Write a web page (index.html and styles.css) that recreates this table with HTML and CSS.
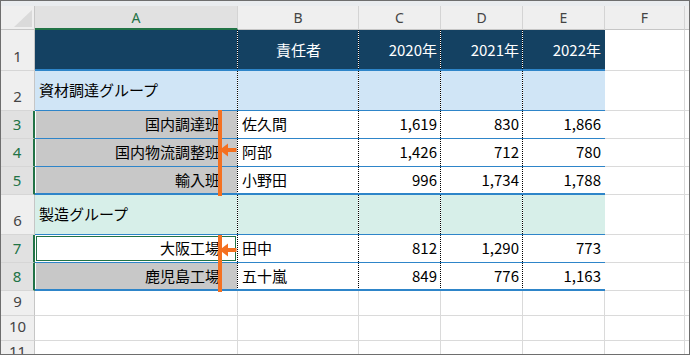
FILE: index.html
```html
<!DOCTYPE html>
<html lang="ja">
<head>
<meta charset="utf-8">
<title>Sheet</title>
<link rel="stylesheet" href="styles.css">
</head>
<body>
<div class="win">
  <div class="strip"></div>
  <div class="sheet">
    <div class="corner"><i></i></div>
    <div class="ch sel">A</div>
    <div class="ch">B</div>
    <div class="ch">C</div>
    <div class="ch">D</div>
    <div class="ch">E</div>
    <div class="ch">F</div>
    <div class="ch end"></div>

    <div class="rh">1</div>
    <div class="c hd dl"></div>
    <div class="c hd dl ctr">責任者</div>
    <div class="c hd dl r">2020年</div>
    <div class="c hd dl r">2021年</div>
    <div class="c hd r">2022年</div>
    <div class="c g"></div>
    <div class="c"></div>

    <div class="rh">2</div>
    <div class="c r2 dl">資材調達グループ</div>
    <div class="c r2 dl"></div>
    <div class="c r2 dl"></div>
    <div class="c r2 dl"></div>
    <div class="c r2"></div>
    <div class="c g"></div>
    <div class="c"></div>

    <div class="rh sel">3</div>
    <div class="c w dl sa ra">国内調達班</div>
    <div class="c w dl">佐久間</div>
    <div class="c w dl r">1,619</div>
    <div class="c w dl r">830</div>
    <div class="c w r">1,866</div>
    <div class="c g"></div>
    <div class="c"></div>

    <div class="rh sel">4</div>
    <div class="c w dl sa ra">国内物流調整班</div>
    <div class="c w dl">阿部</div>
    <div class="c w dl r">1,426</div>
    <div class="c w dl r">712</div>
    <div class="c w r">780</div>
    <div class="c g"></div>
    <div class="c"></div>

    <div class="rh sel">5</div>
    <div class="c w thick dl sa ra">輸入班</div>
    <div class="c w thick dl">小野田</div>
    <div class="c w thick dl r">996</div>
    <div class="c w thick dl r">1,734</div>
    <div class="c w thick r">1,788</div>
    <div class="c g"></div>
    <div class="c"></div>

    <div class="rh">6</div>
    <div class="c r6 dl">製造グループ</div>
    <div class="c r6 dl"></div>
    <div class="c r6 dl"></div>
    <div class="c r6 dl"></div>
    <div class="c r6"></div>
    <div class="c g"></div>
    <div class="c"></div>

    <div class="rh sel">7</div>
    <div class="c w dl ra act">大阪工場</div>
    <div class="c w dl">田中</div>
    <div class="c w dl r">812</div>
    <div class="c w dl r">1,290</div>
    <div class="c w r">773</div>
    <div class="c g"></div>
    <div class="c"></div>

    <div class="rh sel">8</div>
    <div class="c w thick dl sa ra">鹿児島工場</div>
    <div class="c w thick dl">五十嵐</div>
    <div class="c w thick dl r">849</div>
    <div class="c w thick dl r">776</div>
    <div class="c w thick r">1,163</div>
    <div class="c g"></div>
    <div class="c"></div>

    <div class="rh">9</div>
    <div class="c g"></div><div class="c g"></div><div class="c g"></div><div class="c g"></div><div class="c g"></div><div class="c g"></div><div class="c"></div>

    <div class="rh">10</div>
    <div class="c g"></div><div class="c g"></div><div class="c g"></div><div class="c g"></div><div class="c g"></div><div class="c g"></div><div class="c"></div>

    <div class="rh">11</div>
    <div class="c g"></div><div class="c g"></div><div class="c g"></div><div class="c g"></div><div class="c g"></div><div class="c g"></div><div class="c"></div>
  </div>

  <div class="bar bar1"></div>
  <div class="bar bar2"></div>
  <svg class="arrow arrow1" width="18" height="16" viewBox="0 0 18 16"><polygon points="0.5,8 9,1.5 9,6 17.5,6 17.5,10 9,10 9,14.5" fill="#f47020"/></svg>
  <svg class="arrow arrow2" width="18" height="16" viewBox="0 0 18 16"><polygon points="0.5,8 9,1.5 9,6 17.5,6 17.5,10 9,10 9,14.5" fill="#f47020"/></svg>
</div>
</body>
</html>
```

FILE: styles.css
```css
html, body {
  margin: 0;
  padding: 0;
  background: #ffffff;
}

.win {
  position: relative;
  box-sizing: border-box;
  width: 690px;
  height: 355px;
  border: 1px solid #6e6e6e;
  background: #ffffff;
  overflow: hidden;
}

.strip {
  height: 5px;
  background: #e9ecef;
}

.sheet {
  display: grid;
  grid-template-columns: 34px 203px 121px 82px 82px 82px 80px 1fr;
  grid-template-rows: 24px 41px 40px 28px 28px 28px 40px 28px 28px 25px 25px 25px;
  height: 348px;
  overflow: hidden;
}

.corner {
  box-sizing: border-box;
  background: #efefef;
  border-right: 1px solid #c6c6c6;
  border-bottom: 1px solid #c6c6c6;
  display: flex;
  justify-content: flex-end;
  align-items: flex-end;
  padding: 0 2px 2px 0;
}

.corner i {
  display: block;
  width: 18px;
  height: 17px;
  background: #dadada;
  clip-path: polygon(100% 0, 100% 100%, 0 100%);
}

.ch {
  box-sizing: border-box;
  display: flex;
  justify-content: center;
  align-items: center;
  background: #efefef;
  border-right: 1px solid #d4d4d4;
  border-bottom: 1px solid #c6c6c6;
  font: 14px "Noto Sans", "DejaVu Sans", sans-serif;
  color: #444444;
}

.ch.sel {
  background: #e1e1e1;
  color: #217346;
  border-bottom: 2px solid #217346;
}

.ch.end {
  border-right: none;
}

.rh {
  box-sizing: border-box;
  display: flex;
  justify-content: center;
  align-items: flex-end;
  padding-bottom: 6px;
  background: #efefef;
  border-right: 1px solid #c6c6c6;
  border-bottom: 1px solid #d6d6d6;
  font: 15px "Noto Sans", "DejaVu Sans", sans-serif;
  line-height: 1;
  color: #444444;
}

.rh.sel {
  background: #e1e1e1;
  color: #217346;
  border-right: 2px solid #217346;
}

.c {
  box-sizing: border-box;
  display: flex;
  align-items: center;
  padding: 0 4px;
  border-bottom: 1px solid #dadada;
  font: 15px "Noto Sans CJK JP", "Noto Sans", sans-serif;
  color: #000000;
  white-space: nowrap;
  min-width: 0;
}

.g {
  border-right: 1px solid #dadada;
}

.hd {
  background-color: #144162;
  color: #ffffff;
  border-bottom: 2px solid #2e85c9;
}

.r2 {
  background-color: #d0e5f6;
  border-bottom: 1px solid #2e85c9;
  padding-bottom: 3px;
}

.r6 {
  background-color: #d7efe9;
  border-bottom: 1px solid #2e85c9;
  padding-bottom: 2px;
}

.w {
  background-color: #ffffff;
  border-bottom: 1px solid #2e85c9;
  padding-bottom: 2px;
}

.w.thick {
  border-bottom: 2px solid #2e85c9;
}

.sa {
  background-color: #c8c8c8;
  box-shadow: inset 1px 0 0 #ffffff;
}

.dl {
  background-image: repeating-linear-gradient(to bottom, #000000 0, #000000 1px, #ffffff 1px, #ffffff 2px);
  background-size: 1px 100%;
  background-position: right top;
  background-repeat: no-repeat;
}

.r {
  justify-content: flex-end;
}

.ra {
  justify-content: flex-end;
  padding-right: 18px;
}

.ctr {
  justify-content: center;
}

.act {
  position: relative;
}

.act::after {
  content: "";
  position: absolute;
  left: 1px;
  top: 1px;
  right: 2px;
  bottom: 1px;
  border: 1px solid #217346;
}

.bar {
  position: absolute;
  left: 217px;
  width: 4px;
  background: #f47020;
}

.bar1 {
  top: 109px;
  height: 86px;
}

.bar2 {
  top: 234px;
  height: 57px;
}

.arrow {
  position: absolute;
  left: 218px;
}

.arrow1 {
  top: 141px;
}

.arrow2 {
  top: 241px;
}
```
